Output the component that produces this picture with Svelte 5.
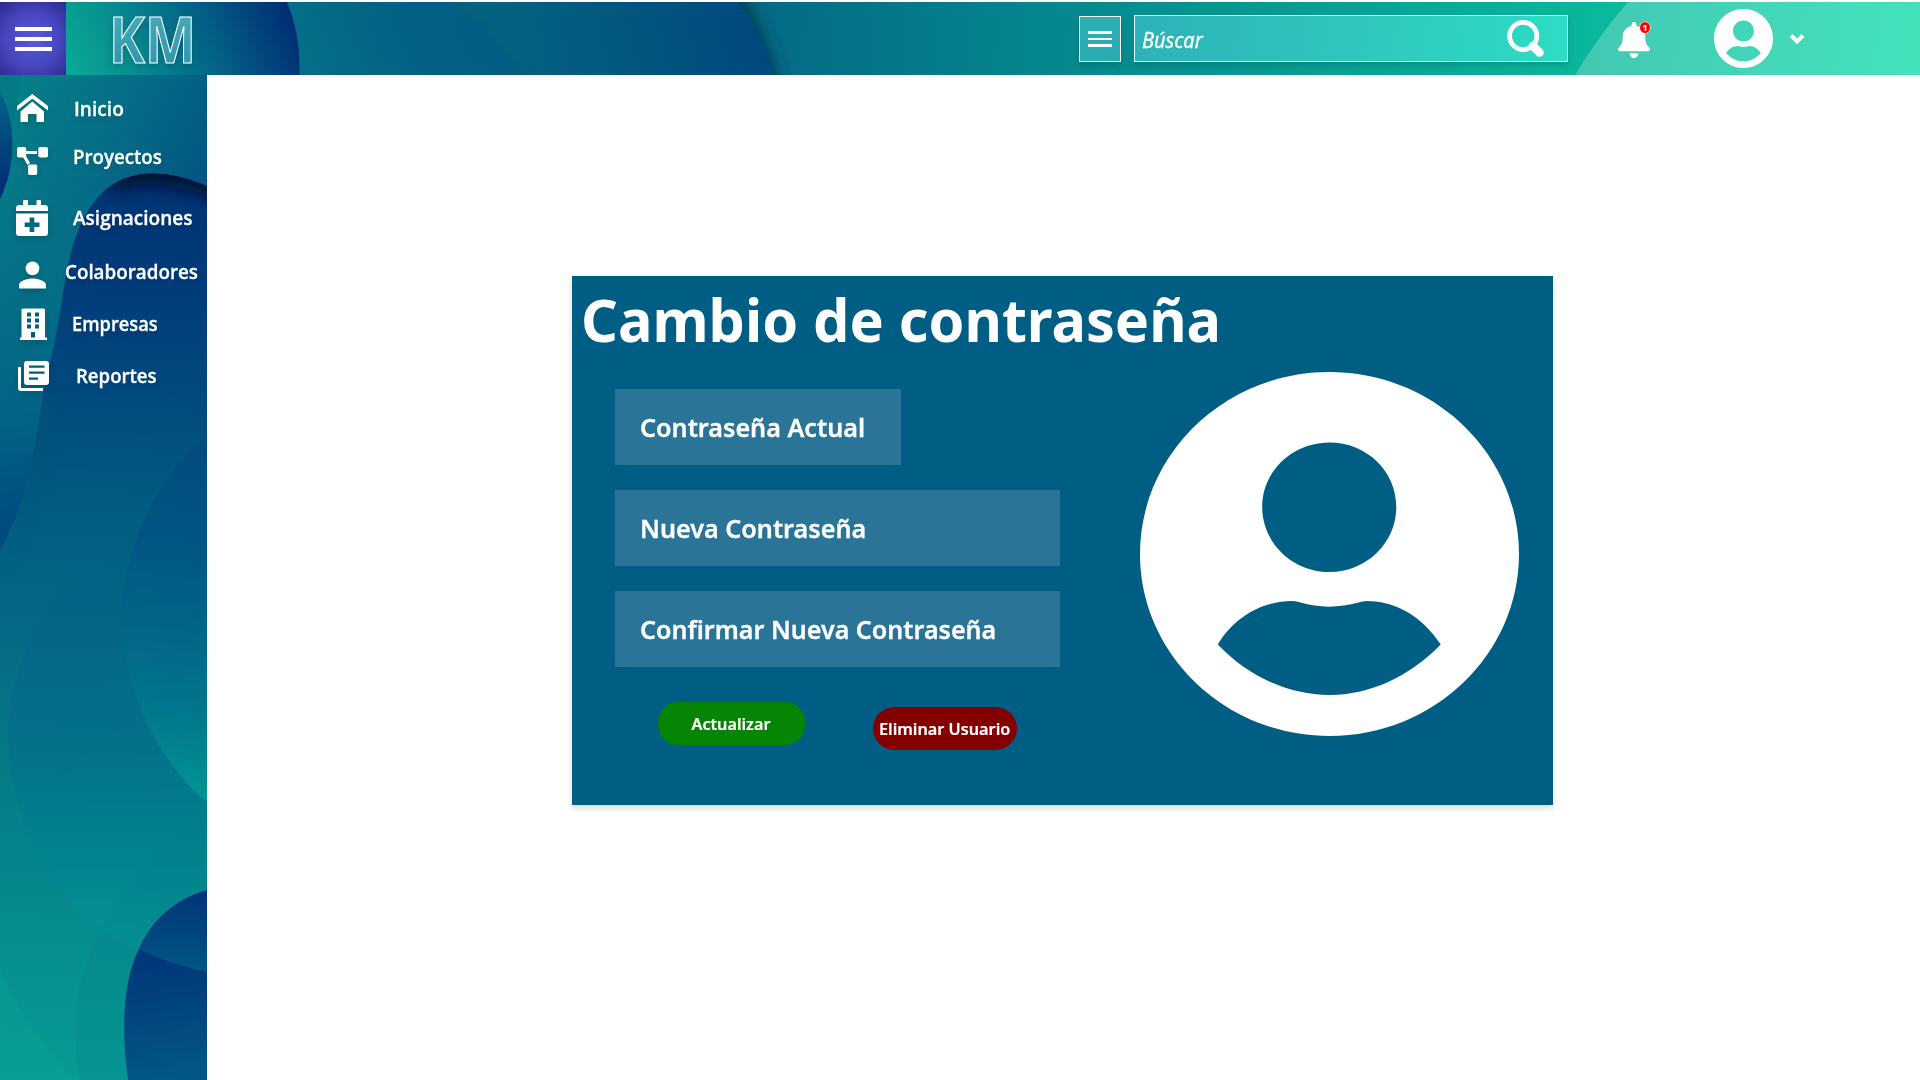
<script>
  const items = [
    { id: 'inicio', label: 'Inicio', width: 50 },
    { id: 'proyectos', label: 'Proyectos', width: 89 },
    { id: 'asignaciones', label: 'Asignaciones', width: 119 },
    { id: 'colaboradores', label: 'Colaboradores', width: 133 },
    { id: 'empresas', label: 'Empresas', width: 86 },
    { id: 'reportes', label: 'Reportes', width: 81 },
  ];

  const fields = [
    { label: 'Contraseña Actual', width: 225, short: true },
    { label: 'Nueva Contraseña', width: 226, short: false },
    { label: 'Confirmar Nueva Contraseña', width: 356, short: false },
  ];

  // Narrows or widens a label so that it fills the given width.
  function fit(node, width) {
    node.style.transform = `scaleX(${width / node.offsetWidth})`;
  }
</script>

{#snippet avatar()}
  <svg class="avatar" viewBox="0 0 380 364" preserveAspectRatio="none">
    <path
      fill="#fff"
      fill-rule="evenodd"
      d="M190 0C295 0 380 82 380 182S295 364 190 364S0 282 0 182S85 0 190 0ZM190 70.500C153 70.500 122.500 99 122.500 135S153 200 190 200S257 171 257 135S227 70.500 190 70.500ZM78 272.500C109 305 150 323 190 323S270 305 301.500 272.500C284 246 258 229 227 229Q223 229 219 230.500C200 236 179 236 161 230.500Q157 229 153 229C121 229 94 246 78 272.500Z"
    />
  </svg>
{/snippet}

<div class="app">
  <header>
    <svg class="art" viewBox="66 2 1854 73" preserveAspectRatio="none">
      <defs>
        <linearGradient id="h1" gradientUnits="userSpaceOnUse" x1="80" y1="90" x2="290" y2="0">
          <stop offset="0" stop-color="#0aa896" /><stop offset=".28" stop-color="#078a8e" />
          <stop offset=".62" stop-color="#035f86" /><stop offset="1" stop-color="#002a74" />
        </linearGradient>
        <linearGradient id="h2" gradientUnits="userSpaceOnUse" x1="300" y1="70" x2="490" y2="0">
          <stop offset="0" stop-color="#047087" /><stop offset=".6" stop-color="#036084" />
          <stop offset="1" stop-color="#035d83" />
        </linearGradient>
        <linearGradient id="h3" gradientUnits="userSpaceOnUse" x1="480" y1="60" x2="760" y2="0">
          <stop offset="0" stop-color="#056581" /><stop offset="1" stop-color="#00487e" />
        </linearGradient>
        <linearGradient id="h4" gradientUnits="userSpaceOnUse" x1="770" y1="0" x2="1600" y2="40">
          <stop offset="0" stop-color="#046b86" /><stop offset=".39" stop-color="#058b8e" />
          <stop offset="1" stop-color="#0ab89c" />
        </linearGradient>
        <linearGradient id="h5" gradientUnits="userSpaceOnUse" x1="1590" y1="0" x2="1920" y2="40">
          <stop offset="0" stop-color="#43c8b3" /><stop offset="1" stop-color="#42e3bc" />
        </linearGradient>
        <filter id="soft" x="-20%" y="-50%" width="140%" height="200%"><feGaussianBlur stdDeviation="9" /></filter>
      </defs>
      <rect x="66" y="2" width="1854" height="73" fill="url(#h4)" />
      <path d="M600 -30H724Q768 30 783 110H600Z" fill="#03303f" filter="url(#soft)" opacity=".95" />
      <path d="M400 2H739Q766 40 776 75H400Z" fill="url(#h3)" />
      <path d="M400 -30H425Q490 20 530 100H400Z" fill="#07586f" filter="url(#soft)" opacity=".6" />
      <path d="M280 2H453Q500 35 523 75H280Z" fill="url(#h2)" />
      <path d="M66 2H287Q301 35 299.500 75H66Z" fill="url(#h1)" />
      <path d="M1628 2Q1599 35 1575 75H1920V2Z" fill="url(#h5)" />
    </svg>
    <button class="menu" aria-label="Menú">
      <i></i><i></i><i></i>
    </button>
    <svg class="logo" viewBox="0 0 90 60">
      <defs>
        <linearGradient id="km" x1="0" y1="0" x2="0" y2="1">
          <stop offset="0" stop-color="#52b1bf" /><stop offset="1" stop-color="#2590a9" />
        </linearGradient>
      </defs>
      <text x="-1" y="53.500" textLength="87" lengthAdjust="spacingAndGlyphs">KM</text>
    </svg>
    <button class="list" aria-label="Lista"><i></i><i></i><i></i></button>
    <div class="search">
      <span class="hint" use:fit={61}>Búscar</span>
      <svg class="lens" viewBox="0 0 40 40">
        <circle cx="17.200" cy="17" r="13.600" fill="none" stroke="#fff" stroke-width="4.800" />
        <path d="M27 27L33.500 33.500" stroke="#fff" stroke-width="8.500" stroke-linecap="round" />
      </svg>
    </div>
    <div class="bell">
      <svg viewBox="0 0 32 36">
        <path
          fill="#fff"
          d="M13.600 4V2.500a2.400 2.400 0 0 1 4.800 0V4C24 5.200 27.300 9.500 27.300 14.500C27.300 20.500 28.500 23 31 25.200C32.800 27 31.800 29.200 29.600 29.200H2.400C.2 29.200-.8 27 1 25.200C3.500 23 4.700 20.500 4.700 14.500C4.700 9.500 8 5.200 13.600 4ZM11.500 31.300H20.500C20 34.300 18.400 36 16 36S12 34.300 11.500 31.300Z"
        />
      </svg>
      <span class="badge">1</span>
    </div>
    <div class="user">{@render avatar()}</div>
    <svg class="chevron" viewBox="0 0 16 12">
      <path d="M2 2.500L8 8.500L14 2.500" fill="none" stroke="#fff" stroke-width="3.900" />
    </svg>
  </header>

  <div class="body">
    <nav>
      <svg class="art" viewBox="0 75 207 1005" preserveAspectRatio="none">
        <defs>
          <linearGradient id="s0" gradientUnits="userSpaceOnUse" x1="20" y1="90" x2="215" y2="190">
            <stop offset="0" stop-color="#067f88" /><stop offset=".5" stop-color="#046b86" />
            <stop offset="1" stop-color="#025282" />
          </linearGradient>
          <linearGradient id="s0b" gradientUnits="userSpaceOnUse" x1="0" y1="190" x2="60" y2="520">
            <stop offset="0" stop-color="#05778700" /><stop offset=".35" stop-color="#046e87" />
            <stop offset=".66" stop-color="#036486" /><stop offset="1" stop-color="#004a80" />
          </linearGradient>
          <linearGradient id="s1" gradientUnits="userSpaceOnUse" x1="0" y1="90" x2="0" y2="200">
            <stop offset="0" stop-color="#046386" /><stop offset="1" stop-color="#002874" />
          </linearGradient>
          <linearGradient id="s2" gradientUnits="userSpaceOnUse" x1="130" y1="173" x2="100" y2="1080">
            <stop offset="0" stop-color="#003374" /><stop offset=".12" stop-color="#003b7a" />
            <stop offset=".25" stop-color="#014b7e" /><stop offset=".37" stop-color="#035b82" />
            <stop offset=".52" stop-color="#056b85" /><stop offset=".64" stop-color="#057985" />
            <stop offset=".76" stop-color="#05848b" /><stop offset=".88" stop-color="#069191" />
            <stop offset="1" stop-color="#079b95" />
          </linearGradient>
          <linearGradient id="s3" gradientUnits="userSpaceOnUse" x1="0" y1="560" x2="0" y2="970">
            <stop offset="0" stop-color="#035f8400" /><stop offset=".12" stop-color="#03618499" />
            <stop offset=".4" stop-color="#036d89" /><stop offset=".62" stop-color="#027b8d" />
            <stop offset=".95" stop-color="#039595" />
          </linearGradient>
          <linearGradient id="s4" gradientUnits="userSpaceOnUse" x1="190" y1="430" x2="160" y2="800">
            <stop offset="0" stop-color="#014b7e" /><stop offset=".34" stop-color="#015785" />
            <stop offset=".6" stop-color="#026a89" /><stop offset=".8" stop-color="#017c8d" />
            <stop offset="1" stop-color="#019695" />
          </linearGradient>
          <linearGradient id="s5" gradientUnits="userSpaceOnUse" x1="0" y1="890" x2="0" y2="1080">
            <stop offset="0" stop-color="#003379" /><stop offset=".43" stop-color="#015785" />
            <stop offset="1" stop-color="#015785" />
          </linearGradient>
          <linearGradient id="s6" gradientUnits="userSpaceOnUse" x1="130" y1="945" x2="150" y2="1080">
            <stop offset="0" stop-color="#003479" /><stop offset=".35" stop-color="#003f7c" />
            <stop offset="1" stop-color="#025786" />
          </linearGradient>
          <clipPath id="blobclip">
            <path d="M207 186C165 168 125 168 100 195C75 222 68 260 62 300C54 350 50 360 43 395C36 450 25 505 0 550V1080H207Z" />
          </clipPath>
          <clipPath id="darkclip">
            <path d="M207 890C174 900 152 920 139 949C123 980 121 1030 128 1080H207Z" />
          </clipPath>
          <filter id="soft2" filterUnits="userSpaceOnUse" x="-40" y="75" width="320" height="600">
            <feGaussianBlur stdDeviation="9" />
          </filter>
        </defs>
        <rect y="75" width="207" height="1005" fill="url(#s0)" />
        <path d="M0 190H110V400L0 560Z" fill="url(#s0b)" />
        <path d="M0 75H22Q14 110 12 140L0 92Z" fill="#04747f" opacity=".35" />
        <path d="M0 92C16 120 17 165 0 199Z" fill="url(#s1)" />
        <g clip-path="url(#blobclip)">
          <rect y="165" width="207" height="915" fill="url(#s2)" />
          <path d="M108 178Q160 158 240 194" fill="none" stroke="#00102c" stroke-width="26" filter="url(#soft2)" />
          <path d="M50 395C43 450 32 505 0 560" fill="none" stroke="#045a70" stroke-width="8" filter="url(#soft2)" opacity=".4" />
          <path d="M207 490C100 520 20 610 8 720C5 830 60 945 207 972Z" fill="url(#s3)" opacity=".8" />
          <path d="M207 815C150 845 80 930 75 1020Q75 1050 80 1080H207Z" fill="#047f8c" opacity=".2" />
          <path d="M0 970Q25 1030 75 1080H0Z" fill="#0aa797" opacity=".3" />
          <path d="M207 435C165 468 122 545 122 615C122 690 160 765 207 802Z" fill="url(#s4)" />
          <path d="M60 712Q120 655 207 650V720Q120 705 60 780Z" fill="#00708a" opacity=".12" />
        </g>
        <g clip-path="url(#darkclip)">
          <rect x="120" y="890" width="87" height="190" fill="url(#s6)" />
          <path d="M120 880H207V972Q165 964 120 940Z" fill="url(#s5)" />
        </g>
      </svg>
      {#each items as item}
        <a class="item {item.id}" href="#{item.id}">
          <svg class="icon" viewBox="0 0 36 36" fill="#fff">
            {#if item.id === 'inicio'}
              <path d="M3 16L18.300 4L34 16V20.500L18.300 8.700L3 20.500ZM6.500 32V21.500L18.300 11.500L30 21.500V32H22.500V24H14V32Z" />
            {:else if item.id === 'proyectos'}
              <rect x="3" y="4" width="9.200" height="10.500" rx="1.800" />
              <rect x="24.300" y="4" width="9.700" height="10.500" rx="1.800" />
              <rect x="14" y="21.500" width="9.200" height="10.500" rx="1.800" />
              <path d="M11 7.900H23V11H11ZM9 14L12 13L16 20L13.500 22Z" />
            {:else if item.id === 'asignaciones'}
              <path
                fill-rule="evenodd"
                d="M9 5V1Q9 0 10 0H13Q14 0 14 1V5H22.500V1Q22.500 0 23.500 0H26Q27 0 27 1V5H30.500Q34 5 34 8V11H2V8Q2 5 5.500 5ZM2 13.500H34V33Q34 36 31 36H5Q2 36 2 33ZM15.600 17.500V22.500H10.700V27H15.600V32H20.300V27H25.500V22.500H20.300V17.500Z"
              />
            {:else if item.id === 'colaboradores'}
              <circle cx="18.500" cy="11.300" r="6.900" />
              <path d="M5 31.500V28C5 24 13 21.500 18.500 21.500S32 24 32 28V31.500Z" />
            {:else if item.id === 'empresas'}
              <path
                fill-rule="evenodd"
                d="M7.500 4Q7.500 2.500 9 2.500H29.500Q31 2.500 31 4V31.500H33V34H6V31.500H7.500ZM13 6.500V10.500H17V6.500ZM21 6.500V10.500H25V6.500ZM13 12.500V16.500H17V12.500ZM21 12.500V16.500H25V12.500ZM13 18.500V22.500H17V18.500ZM21 18.500V22.500H25V18.500ZM17 26V31.500H21V26Z"
              />
            {:else}
              <path
                fill-rule="evenodd"
                d="M14 3H33Q36 3 36 6V24Q36 27 33 27H14Q11 27 11 24V6Q11 3 14 3ZM16 7.500V9.800H31.500V7.500ZM16 13.500V15.800H31.500V13.500ZM16 19.500V21.800H25V19.500ZM5 9H8V30H30V33H8Q5 33 5 30Z"
              />
            {/if}
          </svg>
          <span class="label" use:fit={item.width}>{item.label}</span>
        </a>
      {/each}
    </nav>

    <main>
      <section class="card">
        <h1><span use:fit={640}>Cambio de contraseña</span></h1>
        <div class="content">
          <form>
            {#each fields as field}
              <div class="field" class:short={field.short}>
                <span use:fit={field.width}>{field.label}</span>
              </div>
            {/each}
            <div class="actions">
              <button type="button" class="update"><span use:fit={79}>Actualizar</span></button>
              <button type="button" class="remove"><span use:fit={131}>Eliminar Usuario</span></button>
            </div>
          </form>
          <div class="portrait">{@render avatar()}</div>
        </div>
      </section>
    </main>
  </div>
</div>

<style>
  :global(body) {
    margin: 0;
    background: #fff;
  }
  * {
    box-sizing: border-box;
  }
  .app {
    width: 1920px;
    height: 1080px;
    overflow: hidden;
    display: flex;
    flex-direction: column;
    padding-top: 2px;
    color: #fff;
    font-family: 'Noto Sans', 'Open Sans', sans-serif;
  }
  button {
    font: inherit;
    color: inherit;
    border: 0;
    padding: 0;
  }
  svg {
    display: block;
    flex: none;
  }
  .art {
    position: absolute;
    inset: 0;
    width: 100%;
    height: 100%;
    z-index: -1;
  }
  header {
    position: relative;
    z-index: 0;
    height: 73px;
    flex: none;
    display: flex;
    align-items: flex-start;
  }
  header > .art {
    left: 66px;
    width: 1854px;
  }
  .menu {
    width: 66px;
    height: 73px;
    flex: none;
    display: flex;
    flex-direction: column;
    align-items: flex-start;
    gap: 6px;
    padding: 25px 0 0 15px;
    background: radial-gradient(circle at 50% 52%, #565ade 0%, #4645bd 55%, #2d298d 100%);
  }
  .menu i {
    width: 37px;
    height: 4px;
    background: #fff;
  }
  .logo {
    width: 90px;
    height: 60px;
    margin: 7px 0 0 44px;
    overflow: visible;
    filter: drop-shadow(0 3px 3px #00305040);
  }
  .logo text {
    font: 700 64px 'Noto Sans', sans-serif;
    fill: url(#km);
    stroke: #fff;
    stroke-width: 1.2;
  }
  .list {
    width: 42px;
    height: 46px;
    flex: none;
    margin: 14px 13px 0 879px;
    border: 1px solid #fff;
    background: linear-gradient(#2cafb6, #2baab2);
    display: flex;
    flex-direction: column;
    align-items: flex-start;
    justify-content: center;
    gap: 4px;
    padding-left: 8px;
    box-shadow: 0 3px 6px #00000029;
  }
  .list i {
    width: 24px;
    height: 2.4px;
    background: #fff;
  }
  .search {
    width: 434px;
    height: 47px;
    flex: none;
    margin-top: 13px;
    padding: 0 21px 0 7px;
    display: flex;
    align-items: center;
    justify-content: space-between;
    border: 1px solid #e8fffb;
    background: linear-gradient(95deg, #2cb2b8, #2fc6bd 50%, #2edcc4);
    box-shadow: 0 3px 6px #00000029;
  }
  span {
    display: inline-block;
    white-space: nowrap;
  }
  .hint {
    font-size: 22px;
    font-style: italic;
    transform-origin: left;
    -webkit-text-stroke: 0.3px #fff;
  }
  .lens {
    width: 40px;
    height: 40px;
  }
  .bell {
    position: relative;
    margin: 20px 0 0 50px;
  }
  .bell svg {
    width: 32px;
    height: 36px;
  }
  .badge {
    position: absolute;
    left: 22px;
    top: 0;
    width: 10px;
    height: 11px;
    border-radius: 50%;
    background: #f00;
    box-shadow: 0 0 0 0.5px #fff;
    font: 700 9px/11px 'Noto Sans', sans-serif;
    text-align: center;
  }
  .user {
    width: 59px;
    height: 59px;
    margin: 7px 0 0 64px;
  }
  .avatar {
    width: 100%;
    height: 100%;
  }
  .chevron {
    width: 16px;
    height: 12px;
    margin: 31px 0 0 16px;
  }
  .body {
    flex: 1;
    min-height: 0;
    display: flex;
  }
  nav {
    position: relative;
    z-index: 0;
    width: 207px;
    flex: none;
    padding-top: 10px;
  }
  .item {
    height: 48px;
    display: flex;
    align-items: center;
    padding-left: 14px;
    color: inherit;
    text-decoration: none;
  }
  .icon {
    width: 36px;
    height: 36px;
    filter: drop-shadow(0 3px 3px #00000029);
  }
  .label {
    margin-left: 24px;
    font: 600 19.5px/26px 'Open Sans', 'Noto Sans', sans-serif;
    transform-origin: left;
    -webkit-text-stroke: 0.3px #fff;
    text-shadow: 0 3px 6px #00000029;
  }
  .inicio .icon { margin-top: -2px; }
  .proyectos .icon { margin-top: 8px; }
  .proyectos .label { margin-left: 23px; }
  .asignaciones { height: 74px; }
  .asignaciones .label { margin-left: 23px; }
  .colaboradores { height: 34px; }
  .colaboradores .icon { margin-top: 5px; }
  .colaboradores .label { margin-left: 15px; }
  .empresas { height: 70px; }
  .empresas .label { margin-left: 22px; }
  .reportes { height: 34px; }
  .reportes .icon { margin-left: -1px; }
  .reportes .label { margin-left: 27px; }
  main {
    flex: 1;
    padding: 201px 0 0 365px;
  }
  .card {
    width: 981px;
    height: 529px;
    background: #005e84;
    box-shadow: 0 3px 6px #00000029;
  }
  h1 {
    margin: 0;
    height: 96px;
    padding: 3px 0 0 9px;
    font-size: 59px;
    font-weight: 700;
    line-height: 80px;
  }
  h1 span,
  .field span {
    transform-origin: left;
  }
  .content {
    display: flex;
    justify-content: space-between;
    padding: 0 34px 0 43px;
  }
  form {
    padding-top: 17px;
    display: flex;
    flex-direction: column;
    gap: 25px;
  }
  .field {
    width: 445px;
    height: 76px;
    padding-left: 24.5px;
    display: flex;
    align-items: center;
    background: #2a7597;
    font-size: 25.5px;
    font-weight: 600;
    -webkit-text-stroke: 0.3px #fff;
  }
  .field.short {
    width: 286px;
  }
  .actions {
    display: flex;
    gap: 68px;
    margin-top: 10px;
    padding-left: 43px;
    font-size: 16px;
    font-weight: 600;
    -webkit-text-stroke: 0.2px #fff;
  }
  .actions button {
    height: 43px;
    display: flex;
    align-items: center;
    justify-content: center;
  }
  .update {
    width: 147px;
    padding-right: 2px;
    border-radius: 20px;
    background: #058503;
  }
  .remove {
    width: 144px;
    margin-top: 5px;
    border-radius: 22px;
    background: #840000;
  }
  .portrait {
    width: 379px;
    height: 364px;
  }
</style>
